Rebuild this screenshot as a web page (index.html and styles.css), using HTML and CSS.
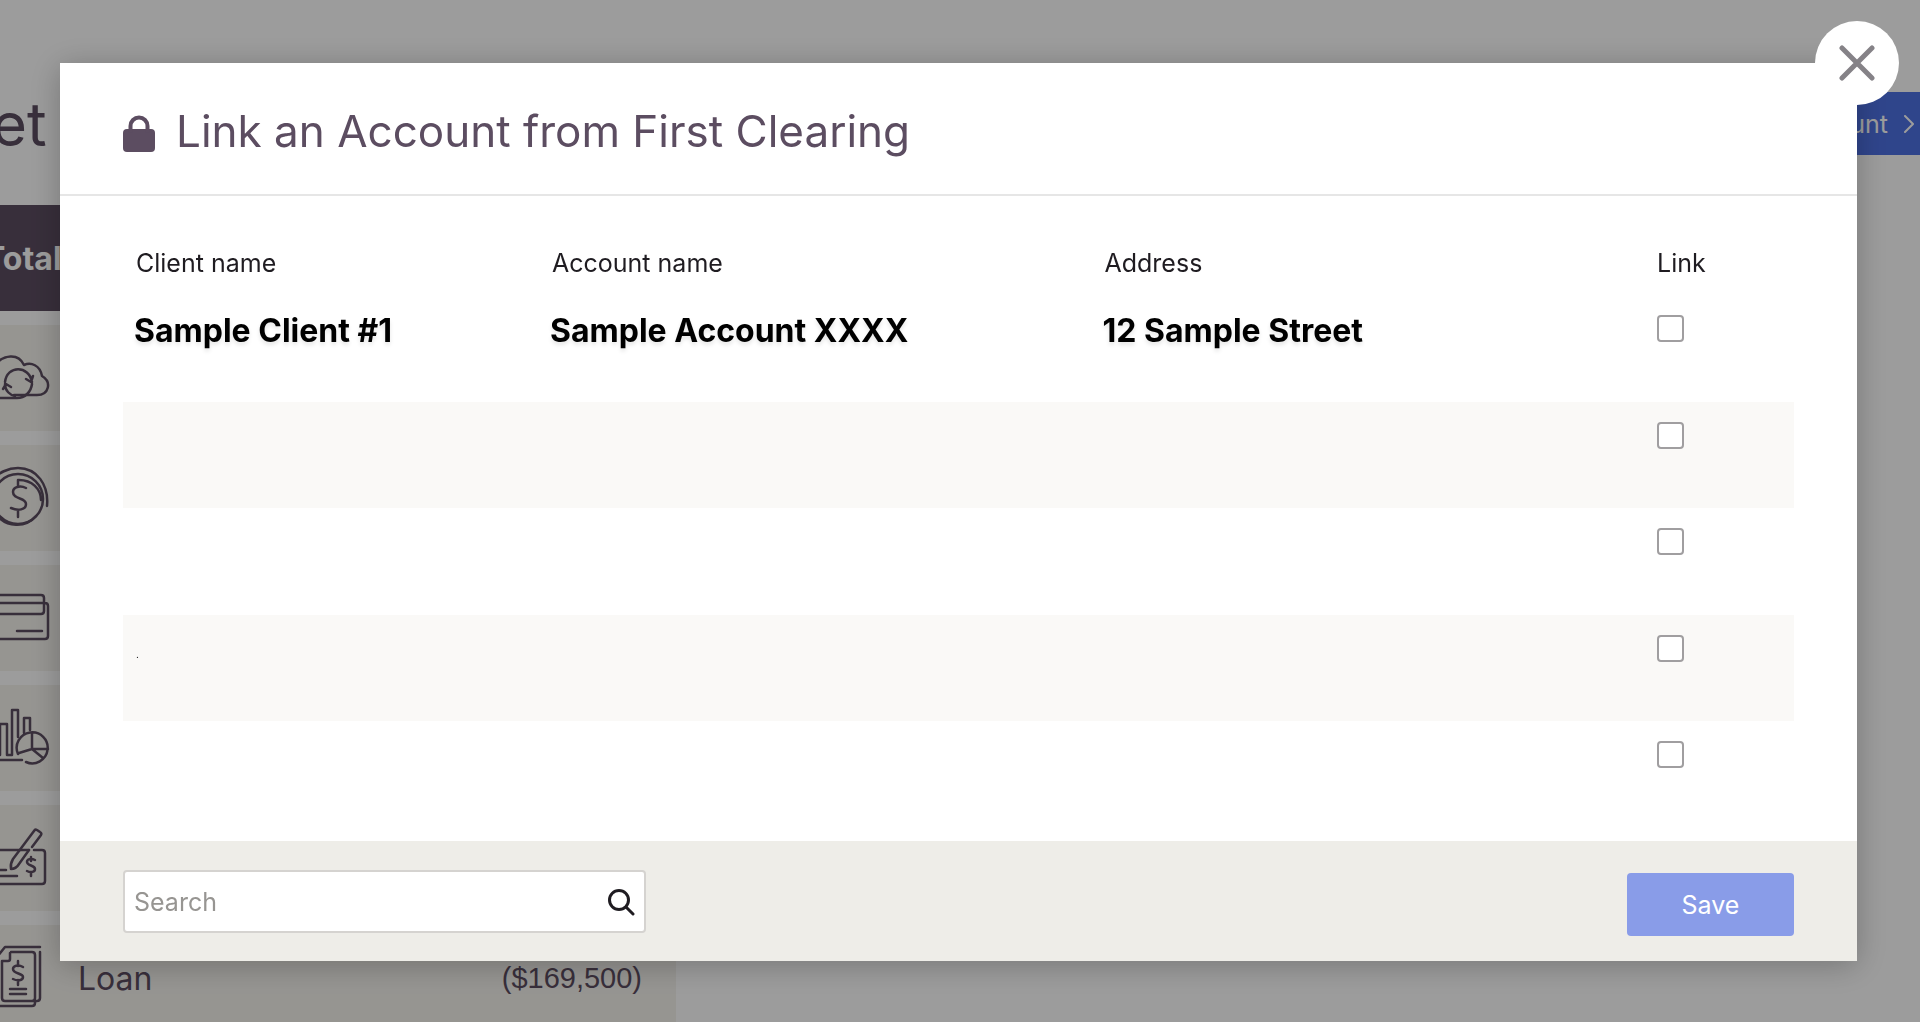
FILE: index.html
```html
<!DOCTYPE html>
<html lang="en">
<head>
    <meta charset="UTF-8">
    <meta name="viewport" content="width=device-width, initial-scale=1.0">
    <title>Link an Account</title>
    <link rel="stylesheet" href="styles.css">
</head>
<body>
    <div class="page">
        <div class="page-header">
            <h1>et</h1>
            <button class="add-account" type="button">
                unt
                <svg width="10" height="18" viewBox="0 0 10 18"><path d="M1 1l8 8-8 8"/></svg>
            </button>
        </div>

        <div class="balance">
            <div class="balance-row total">Total</div>
            <div class="balance-row">
                <!-- cloud -->
                <svg class="icon" viewBox="0 0 60 106">
                    <path d="M-3 38C3 31 18 27 24 40c7-3 16 0 18 11 10 6 7 19-5 19H14"/>
                    <path d="M-3 73H17c8 0 14-6 15-14"/>
                    <path d="M5 57c2-17 24-17 27 0M26 54l5 3 2-6"/>
                    <path d="M5 59c0 7 5 11 10 12M3 64l3-5 5 3"/>
                </svg>
            </div>
            <div class="balance-row">
                <!-- coin -->
                <svg class="icon" viewBox="0 0 60 106">
                    <circle cx="18" cy="54" r="25"/>
                    <path d="M-6 34C-2 28 8 23 18 23 37 23 49 40 47 61M19 35c13 0 22 9 22 20M-4 69c10 14 30 14 40 2"/>
                    <path d="M18 35v7M26 43c-6-3-13-1-13 4 0 8 13 5 13 12 0 6-8 7-15 4M18 65v7"/>
                </svg>
            </div>
            <div class="balance-row">
                <!-- cards -->
                <svg class="icon" viewBox="0 0 60 106">
                    <path d="M-3 30H41q3 0 3 3V46q0 3-3 3H-3M-3 38H45q3 0 3 3V71q0 3-3 3H-3M17 66H42"/>
                </svg>
            </div>
            <div class="balance-row">
                <!-- charts -->
                <svg class="icon" viewBox="0 0 60 106">
                    <path d="M0 70V39H7V70M12 70V25H18V52M12 70H7M24 48V33H30V45M-3 75H22"/>
                    <path d="M26 77a15.500 15.500 0 1 0-8-8M32 48V64H48M32 64L19 68M32 64L43 73"/>
                </svg>
            </div>
            <div class="balance-row">
                <!-- cheque -->
                <svg class="icon" viewBox="0 0 60 106">
                    <path d="M-3 45H29M34 45H42q3 0 3 3V76q0 3-3 3H-3M-3 65H6M-3 71H17"/>
                    <path d="M32 42L41 30q1-2-1-3l-3-2q-2-1-3 1L13 54q-3 5-2 10 5 0 8-5l10-14"/>
                    <path d="M35 55c-4-2-8-1-8 2 0 4 8 3 8 7 0 3-4 4-8 2M31 52v4M31 67v4"/>
                </svg>
            </div>
            <div class="balance-row">
                <!-- documents -->
                <svg class="icon" viewBox="0 0 60 106">
                    <path d="M11 27H32q3 0 3 3V73q0 3-3 3H5q-3 0-3-3V36H8q2 0 2-2V28M-3 32L5 22H40M40 27V73q0 3-3 3H35V78q0 3-3 3H-3"/>
                    <path d="M23 42c-5-3-10-1-10 2 0 5 10 4 10 8 0 4-6 4-10 2M18 36v5M18 55v5M10 64H26M10 69H26"/>
                </svg>
                <span class="name">Loan</span>
                <span class="amount">($169,500)</span>
            </div>
        </div>
    </div>

    <div class="overlay">
        <form class="modal" role="dialog" aria-labelledby="modal-title">
            <button class="close" type="button" aria-label="Close">
                <svg width="36" height="36" viewBox="0 0 36 36"><path d="M3 3l30 30M33 3L3 33"/></svg>
            </button>

            <div class="modal-header">
                <svg class="lock" width="34" height="44" viewBox="0 -6 34 44">
                    <rect x="1" y="14" width="32" height="23" rx="4"/>
                    <path d="M8.500 16V11a8.500 8.500 0 0 1 17 0v5"/>
                </svg>
                <h2 id="modal-title">Link an Account from First Clearing</h2>
            </div>

            <div class="modal-body">
                <table class="accounts">
                    <thead>
                        <tr>
                            <th class="col-client">Client name</th>
                            <th>Account name</th>
                            <th>Address</th>
                            <th class="col-link">Link</th>
                        </tr>
                    </thead>
                    <tbody>
                        <tr>
                            <td>Sample Client #1</td>
                            <td>Sample Account XXXX</td>
                            <td>12 Sample Street</td>
                            <td><input type="checkbox" aria-label="Link"></td>
                        </tr>
                        <tr>
                            <td></td>
                            <td></td>
                            <td></td>
                            <td><input type="checkbox" aria-label="Link"></td>
                        </tr>
                        <tr>
                            <td></td>
                            <td></td>
                            <td></td>
                            <td><input type="checkbox" aria-label="Link"></td>
                        </tr>
                        <tr>
                            <td class="empty">.</td>
                            <td></td>
                            <td></td>
                            <td><input type="checkbox" aria-label="Link"></td>
                        </tr>
                        <tr>
                            <td></td>
                            <td></td>
                            <td></td>
                            <td><input type="checkbox" aria-label="Link"></td>
                        </tr>
                    </tbody>
                </table>
            </div>

            <div class="modal-footer">
                <label class="search">
                    <input type="search" placeholder="Search" aria-label="Search">
                    <svg width="28" height="28" viewBox="0 0 28 28"><circle cx="12" cy="12" r="9.500"/><path d="M19 19l7 7"/></svg>
                </label>
                <button class="save" type="submit">Save</button>
            </div>
        </form>
    </div>
</body>
</html>
```

FILE: styles.css
```css
* {
    box-sizing: border-box;
}
body {
    margin: 0;
    font-family: Inter, "Liberation Sans", sans-serif;
    font-size: 25px;
    color: #1f1c21;
    background: #fff;
}
h1, h2 {
    margin: 0;
    font-weight: normal;
    color: #5c4d61;
}
button, input {
    font-family: inherit;
    font-size: inherit;
}
svg {
    fill: none;
    stroke-linecap: round;
    stroke-linejoin: round;
    flex-shrink: 0;
}

/* page behind the modal */
.page {
    height: 100vh;
    overflow: hidden;
}
.page-header {
    display: flex;
    justify-content: space-between;
    align-items: flex-start;
    height: 205px;
    padding-top: 92px;
}
.page-header h1 {
    margin-left: -8px;
    font-size: 60px;
    line-height: 64px;
}
.add-account {
    display: flex;
    justify-content: flex-end;
    align-items: center;
    gap: 16px;
    width: 120px;
    height: 63px;
    padding: 0 6px;
    border: 0;
    background: #4e71e4;
    color: #fff;
}
.add-account svg {
    stroke: #fff;
    stroke-width: 2;
}
.balance {
    display: flex;
    flex-direction: column;
    gap: 14px;
    width: 676px;
}
.balance-row {
    display: flex;
    align-items: center;
    flex-shrink: 0;
    height: 106px;
    padding-right: 34px;
    background: #f5f3ee;
    color: #5c4d61;
    font-size: 32px;
}
.balance-row.total {
    margin-left: -16px;
    background: #5c4d61;
    color: #fff;
    font-weight: bold;
}
.icon {
    width: 60px;
    height: 106px;
    stroke: #5c4d61;
    stroke-width: 2.5;
}
.name {
    margin-left: 18px;
}
.amount {
    margin-left: auto;
    font-family: "Liberation Sans", sans-serif;
    font-size: 29px;
}

/* modal */
.overlay {
    position: fixed;
    top: 0;
    left: 0;
    width: 100%;
    height: 100%;
    padding: 63px 63px 60px 60px;
    background: rgba(0, 0, 0, 0.39);
}
.modal {
    position: relative;
    background: #fff;
    box-shadow: 0 4px 30px rgba(0, 0, 0, 0.25);
}
.close {
    position: absolute;
    top: -42px;
    right: -42px;
    display: flex;
    align-items: center;
    justify-content: center;
    width: 84px;
    height: 84px;
    padding: 0;
    border: 0;
    border-radius: 50%;
    background: #fff;
}
.close svg {
    stroke: #858287;
    stroke-width: 5;
}
.modal-header {
    display: flex;
    align-items: center;
    gap: 20px;
    height: 133px;
    padding: 4px 62px 0;
    border-bottom: 2px solid #e6e6e6;
}
.modal-header h2 {
    font-size: 44px;
    line-height: 56px;
}
.lock {
    stroke: #5c4d61;
    stroke-width: 4;
}
.lock rect {
    fill: #5c4d61;
    stroke: none;
}
.modal-body {
    padding: 34px 63px 13px;
}
.accounts {
    width: 100%;
    table-layout: fixed;
    border-collapse: collapse;
}
.accounts th {
    height: 65px;
    padding: 0 13px;
    text-align: left;
    font-weight: normal;
}
.accounts td {
    height: 107px;
    padding: 16px 11px;
    vertical-align: top;
    color: #000;
    font-size: 32px;
    font-weight: bold;
    line-height: 40px;
    text-shadow: 0 3px 4px rgba(0, 0, 0, 0.1);
}
.accounts tbody tr:nth-child(even) {
    background: #faf9f7;
}
.accounts tbody tr:nth-child(even) td {
    height: 106px;
}
.col-client {
    width: 416px;
}
.col-link {
    width: 150px;
}
.accounts td.empty {
    padding-left: 13px;
    font-size: 10px;
    font-weight: normal;
    line-height: 46px;
    text-shadow: none;
}
.accounts input {
    appearance: none;
    display: block;
    width: 27px;
    height: 27px;
    margin: 4px 2px;
    border: 2px solid #a09ea0;
    border-radius: 4px;
    background: #fff;
}
.modal-footer {
    display: flex;
    justify-content: space-between;
    height: 120px;
    padding: 29px 63px 25px;
    background: #eeede8;
}
.search {
    display: flex;
    align-items: center;
    align-self: flex-start;
    width: 523px;
    height: 63px;
    padding: 0 9px;
    border: 2px solid #d5d3d0;
    border-radius: 4px;
    background: #fff;
}
.search input {
    flex: 1;
    min-width: 0;
    padding: 0;
    border: 0;
    outline: 0;
    background: none;
    appearance: none;
}
.search input::placeholder {
    color: #979592;
}
.search svg {
    stroke: #1f1c21;
    stroke-width: 3;
}
.save {
    align-self: flex-end;
    width: 167px;
    height: 63px;
    border: 0;
    border-radius: 4px;
    background: #899ce8;
    color: #fff;
}
```
